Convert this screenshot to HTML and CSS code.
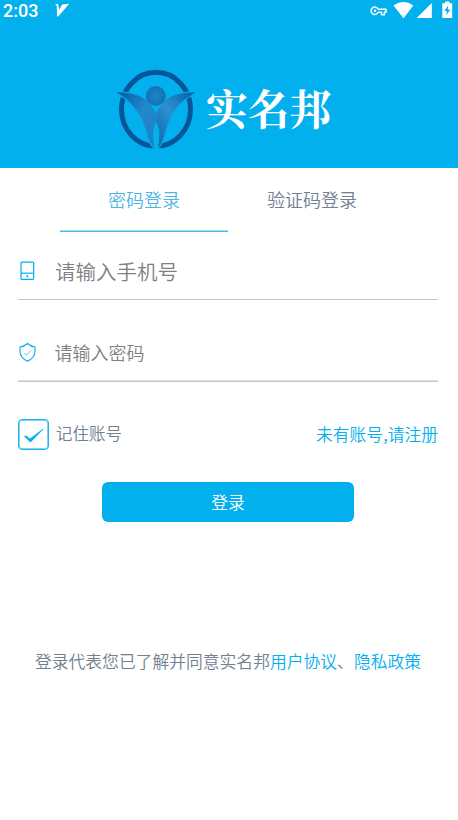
FILE: index.html
```html
<!DOCTYPE html>
<html lang="zh-CN">
<head>
<meta charset="utf-8">
<title>实名邦</title>
<link rel="stylesheet" href="styles.css">
</head>
<body>
<header class="header">
  <div class="status">
    <span class="clock">2:03</span>
    <svg class="status-mark" width="16" height="15" viewBox="0 0 16 15"><path fill="#fff" d="M0 1.200 3 1 4.200 6.800 7.200 1.500 14.300.8 3.200 13.500 2 13.500 1.800 3Z"/></svg>
    <svg class="status-icons" width="86" height="20" viewBox="0 0 86 20">
      <path fill="none" stroke="#fff" stroke-width="1.500" stroke-linejoin="round" d="M8.200 9.300H16V12.300H14.400V14.800H11.500V12.300H8.200A3.700 3.700 0 1 1 8.200 9.300Z"/>
      <circle cx="5" cy="10.800" r="1.200" fill="#fff"/>
      <path fill="#fff" d="M23.500 5.400Q33.500-1.200 43.300 5.400L33.500 18.200Z"/>
      <path fill="#fff" d="M61.800 3V18H46.600Z"/>
      <path fill="#fff" d="M72.300 3.300H75V1.500H79.500V3.300H82.200V18H72.300Z"/>
      <path fill="#03b0ee" d="M78.300 5.300 74.400 11H76.800L76.300 15.300 80.300 9.500H77.800Z"/>
    </svg>
  </div>
  <div class="brand">
    <svg class="logo" width="80" height="82" viewBox="30 27 240 246">
      <defs>
        <linearGradient id="wingL" x1="0" y1="0" x2="1" y2="1"><stop offset="0" stop-color="#0759a0"/><stop offset=".5" stop-color="#2388cc"/><stop offset="1" stop-color="#1b7fc5"/></linearGradient>
        <linearGradient id="wingR" x1="1" y1="0" x2="0" y2="1"><stop offset="0" stop-color="#0759a0"/><stop offset=".5" stop-color="#2b90d2"/><stop offset="1" stop-color="#0b65ad"/></linearGradient>
        <radialGradient id="head"><stop offset="0" stop-color="#2083c6"/><stop offset="1" stop-color="#1272b7"/></radialGradient>
      </defs>
      <ellipse cx="153" cy="148" rx="103.500" ry="111" fill="none" stroke="#07569a" stroke-width="15"/>
      <path fill="#03b0ee" stroke="#03b0ee" stroke-width="6" stroke-linejoin="round" d="M33 97Q105 98 130 127Q146 143 153 159Q160 143 174 128Q203 97 272 97Q242 113 220 136Q193 169 180 220Q172 250 159 264H148Q132 250 126 220Q113 173 85 139Q66 114 33 97Z"/>
      <path fill="url(#wingL)" d="M33 97Q105 98 130 127Q146 143 152.500 160V186Q144 202 144 222Q144 243 149 264Q132 250 126 220Q113 173 85 139Q66 114 33 97Z"/>
      <path fill="url(#wingR)" d="M272 97Q203 97 174 128Q160 143 153.500 160V186Q163 202 163 222Q163 243 159 264Q172 250 180 220Q193 169 220 136Q242 113 272 97Z"/>
      <circle cx="152.500" cy="108" r="30" fill="url(#head)"/>
    </svg>
    <h1 class="name">实名邦</h1>
  </div>
</header>
<main class="main">
  <nav class="tabs">
    <a class="tab active">密码登录</a>
    <a class="tab">验证码登录</a>
  </nav>
  <label class="field phone">
    <svg width="20" height="22" viewBox="0 0 20 22" fill="none" stroke="#03b0ee" stroke-width="1.200"><rect x="3" y="2.200" width="12.700" height="17.200" rx="1"/><path d="M3 13.200H15.700"/><circle cx="9.400" cy="16.300" r=".5" fill="#03b0ee"/></svg>
    <span>请输入手机号</span>
  </label>
  <label class="field password">
    <svg width="20" height="22" viewBox="0 0 20 22" fill="none" stroke="#03b0ee" stroke-width="1.100"><path d="M9.500 1.500Q13 4.700 17 5V9.500Q17 15.500 9.500 19.300Q2 15.500 2 9.500V5Q6 4.700 9.500 1.500Z"/><path stroke-width=".7" d="M6.500 11 8.500 13 13 8.500"/></svg>
    <span>请输入密码</span>
  </label>
  <div class="options">
    <span class="check"><svg width="29" height="29" viewBox="0 0 29 29"><path fill="#03b0ee" d="M5 16.300 7 15.500 11 18.400 24 8.700 24.400 9.300 11.500 22.500Z"/></svg></span>
    <span class="remember">记住账号</span>
    <a class="register">未有账号,请注册</a>
  </div>
  <button class="submit">登录</button>
  <p class="terms">登录代表您已了解并同意实名邦<a>用户协议</a>、<a>隐私政策</a></p>
</main>
</body>
</html>
```
FILE: styles.css
```css
* { box-sizing: border-box; }
body {
  margin: 0;
  background: #fff;
  color: #708090;
  font-family: "Noto Sans CJK SC", sans-serif;
  font-weight: 350;
}
.header { height: 168px; background: #03b0ee; color: #fff; }
.status { display: flex; height: 22px; padding-left: 3px; }
.clock { width: 52px; font: 500 18px/22px Roboto, sans-serif; }
.status-mark { margin-top: 3px; }
.status-icons { margin-left: auto; margin-right: 2px; }
.brand { display: flex; padding: 47px 0 0 115px; }
.name {
  margin: 8px 0 0 11px;
  font: 700 41.800px/60px "Noto Serif CJK SC", "Noto Serif SC", "Noto Sans CJK SC", serif;
}
.main { padding: 0 20px 0 18px; }
.tabs { display: flex; height: 64px; margin-left: 42px; }
.tab { width: 168px; font-size: 18px; line-height: 62px; text-align: center; }
.tab.active { color: #4eb5e5; border-bottom: 1px solid #4eb5e5; box-shadow: inset 0 -1px #a5daf1; }
.field { display: flex; align-items: center; border-bottom: 1px solid #c4c4c4; color: #808080; }
.field span { margin-left: 17px; }
.phone { height: 68px; font-size: 20.500px; }
.phone svg { margin-top: 10px; }
.phone span { padding-top: 11px; }
.password { height: 82px; padding-top: 24px; font-size: 18px; box-shadow: inset 0 -1px #e0e0e0; }
.password span { margin: -2px 0 0 16.500px; }
.options { display: flex; align-items: center; height: 32px; margin-top: 37px; font-size: 16.500px; }
.check { display: flex; width: 31px; height: 31px; margin-top: -1px; border: 1px solid #18b5ef; border-radius: 4px; box-shadow: inset 0 0 0 1px #7fd4f5; }
.remember { margin: -5px 0 0 7px; }
.register { margin: -2px 0 0 auto; color: #03b0ee; font-size: 16.800px; }
.submit {
  display: block;
  width: 252px;
  height: 40.500px;
  margin: 30.500px 0 0 84px;
  padding: 0;
  border: 0;
  border-radius: 6px;
  background: #03b0ee;
  color: #fff;
  font: 350 16.800px/40px "Noto Sans CJK SC", sans-serif;
}
.terms { margin: 126px 0 0; font-size: 16.800px; line-height: 26px; text-align: center; white-space: nowrap; }
.terms a { color: #03b0ee; }
```
